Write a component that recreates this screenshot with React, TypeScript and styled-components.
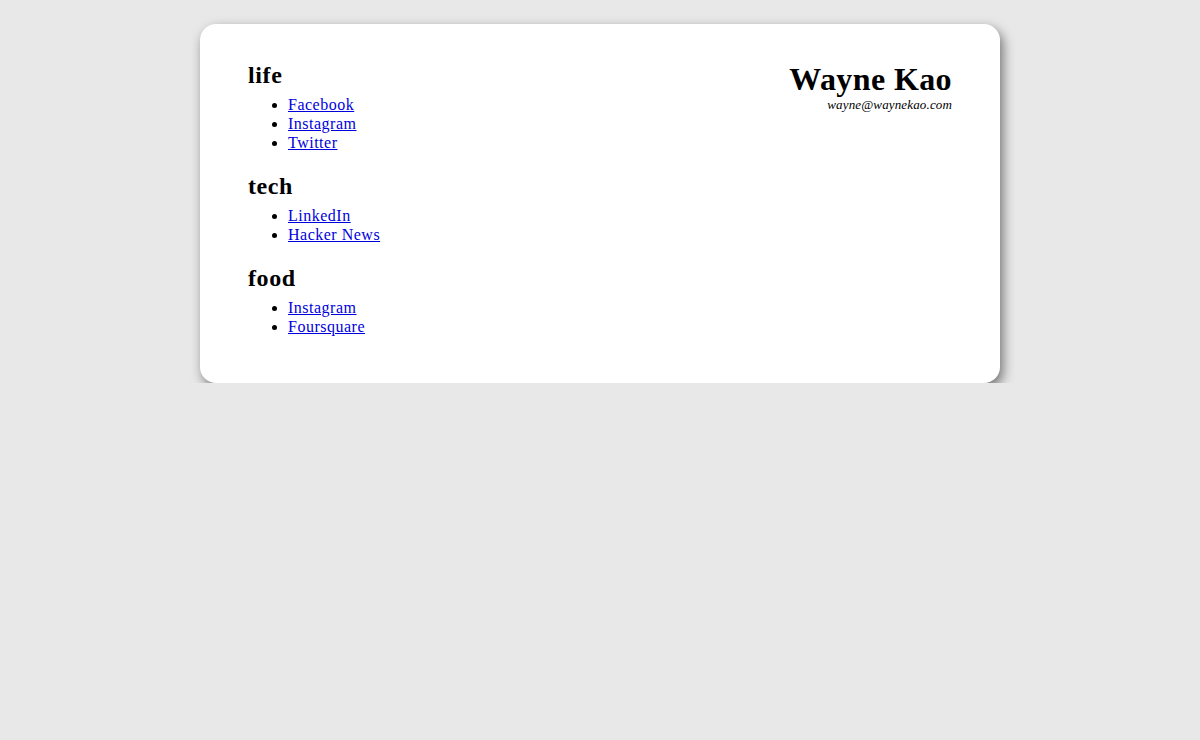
import React from "react";
import styled, { createGlobalStyle } from "styled-components";

const Global = createGlobalStyle`
  html, body { margin: 0; padding: 0; background: #e8e8e8; }
  body { font-family: "Liberation Serif", "Times New Roman", serif; color: #000; }
`;

const Page = styled.div`
  padding-top: 24px;
  display: flex;
  justify-content: center;
`;

const Card = styled.div`
  width: 800px;
  box-sizing: border-box;
  background: #fff;
  border-radius: 16px;
  box-shadow: 3px 5px 12px rgba(0, 0, 0, 0.5);
  padding: 37px 48px 47px;
  display: flex;
  justify-content: space-between;
  align-items: flex-start;
`;

const Links = styled.div`
  display: flex;
  flex-direction: column;
  gap: 20px;
`;

const Section = styled.section`
  display: flex;
  flex-direction: column;
  gap: 6px;
`;

const Heading = styled.h2`
  margin: 0;
  font-size: 24px;
  line-height: 28px;
  font-weight: bold;
  letter-spacing: 0.6px;
`;

const List = styled.ul`
  margin: 0;
  padding-left: 40px;
  list-style: disc;
`;

const Item = styled.li`
  font-size: 16px;
  line-height: 19px;
  letter-spacing: 0.5px;
`;

const Link = styled.a`
  color: #0000dd;
  text-decoration: underline;
`;

const Identity = styled.div`
  text-align: right;
  padding-top: 1px;
`;

const Name = styled.h1`
  margin: 0;
  font-size: 32px;
  line-height: 35px;
  font-weight: bold;
  letter-spacing: 0.4px;
`;

const Email = styled.div`
  font-size: 13px;
  line-height: 15px;
  font-style: italic;
  letter-spacing: 0.15px;
`;

const sections = [
  { title: "life", links: ["Facebook", "Instagram", "Twitter"] },
  { title: "tech", links: ["LinkedIn", "Hacker News"] },
  { title: "food", links: ["Instagram", "Foursquare"] },
];

export default function App() {
  return (
    <>
      <Global />
      <Page>
        <Card>
          <Links>
            {sections.map((s) => (
              <Section key={s.title}>
                <Heading>{s.title}</Heading>
                <List>
                  {s.links.map((l) => (
                    <Item key={l}>
                      <Link href="#">{l}</Link>
                    </Item>
                  ))}
                </List>
              </Section>
            ))}
          </Links>
          <Identity>
            <Name>Wayne Kao</Name>
            <Email>wayne@waynekao.com</Email>
          </Identity>
        </Card>
      </Page>
    </>
  );
}
